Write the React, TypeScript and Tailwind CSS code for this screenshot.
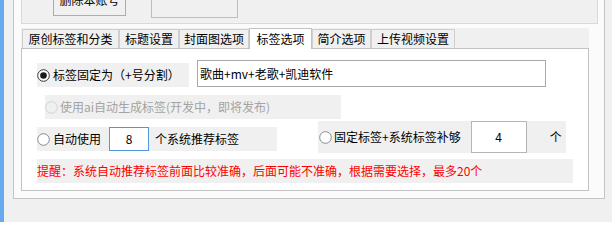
const TABS = [
  { label: "原创标签和分类", w: "w-[97px]" },
  { label: "标题设置", w: "w-[60px]" },
  { label: "封面图选项", w: "w-[70px]" },
  { label: "标签选项", w: "w-[63px]", active: true },
  { label: "简介选项", w: "w-[59px]" },
  { label: "上传视频设置", w: "w-[84px]" },
];

function Radio({ checked = false, disabled = false }: { checked?: boolean; disabled?: boolean }) {
  const stroke = disabled ? "#d2d2d2" : checked ? "#333333" : "#8a8a8a";
  return (
    <svg width="13" height="13" viewBox="0 0 13 13" className="shrink-0">
      <circle cx="6.5" cy="6.5" r="5.8" fill={disabled ? "#f0f0f0" : "#ffffff"} stroke={stroke} strokeWidth="1" />
      {checked && <circle cx="6.5" cy="6.5" r="3.3" fill="#1a1a1a" />}
    </svg>
  );
}

export default function App() {
  return (
    <div className="flex h-[222px] w-[612px] overflow-hidden bg-[#f0f0f0] font-['Noto_Sans_CJK_SC',sans-serif] text-[12px] leading-none text-black">
      <div className="w-[4px] shrink-0 bg-[#66a9ef]" />

      {/* outer group box, top runs off the picture */}
      <div className="ml-[9px] mt-[-30px] h-[229px] w-[592px] shrink-0 border border-[#c4c4c4] bg-[#fbfbfb] px-[7px]">
        {/* top settings panel */}
        <div className="flex h-[53px] w-[577px] items-start border border-[#d9d9d9] bg-[#f0f0f0] pl-[31px]">
          <button className="mt-[11px] flex h-[33px] w-[73px] items-center justify-center border border-[#adadad] bg-[#f0f0f0] text-[12px]">
            删除本账号
          </button>
          <div className="ml-[25px] mt-[18px] h-[28px] w-[87px] border border-[#bdbdbd] bg-[#f0f0f0]" />
        </div>

        {/* tab control */}
        <div className="mt-[4px] flex h-[163px] w-[568px] flex-col">
          <div className="flex h-[20px] shrink-0 items-end bg-[#f0f0f0] pl-[1px]">
            {TABS.map((t) =>
              t.active ? (
                <div
                  key={t.label}
                  className={`${t.w} relative z-10 mb-[-1px] flex h-[21px] items-center justify-center border border-b-0 border-[#c2c2c2] bg-white`}
                >
                  {t.label}
                </div>
              ) : (
                <div
                  key={t.label}
                  className={`${t.w} flex h-[19px] items-center justify-center border border-b-0 border-[#cfcfcf] bg-[#f0f0f0]`}
                >
                  {t.label}
                </div>
              )
            )}
          </div>

          <div className="flex h-[143px] flex-col border border-[#c2c2c2] bg-white pt-[11px]">
            {/* fixed tags */}
            <div className="flex items-start">
              <div className="ml-[15px] mt-[3px] flex h-[24px] w-[152px] items-center gap-[3px] bg-[#f0f0f0]">
                <Radio checked />
                <span>标签固定为（+号分割）</span>
              </div>
              <div className="ml-[8px] flex h-[27px] w-[349px] items-center border border-[#a9a9a9] bg-white pl-[2px]">
                歌曲+mv+老歌+凯迪软件
              </div>
            </div>

            {/* ai tags, disabled */}
            <div className="ml-[23px] mt-[8px] flex h-[24px] w-[296px] items-center gap-[2px] bg-[#f0f0f0] text-[#a3a3a3]">
              <Radio disabled />
              <span>使用ai自动生成标签(开发中，即将发布)</span>
            </div>

            {/* auto / fixed+system */}
            <div className="mt-[2px] flex items-start">
              <div className="ml-[15px] mt-[6px] flex h-[24px] w-[240px] items-center bg-[#f0f0f0]">
                <Radio />
                <span className="ml-[3px]">自动使用</span>
                <div className="ml-[8px] flex h-[24px] w-[40px] items-center justify-center border border-[#4f98df] bg-white">
                  8
                </div>
                <span className="ml-[6px]">个系统推荐标签</span>
              </div>
              <div className="ml-[41px] flex h-[32px] w-[248px] items-center bg-[#f0f0f0] pl-[1px]">
                <Radio />
                <span className="ml-[2px]">固定标签+系统标签补够</span>
                <div className="ml-[10px] flex h-[32px] w-[56px] items-center justify-center border border-[#b5b5b5] bg-white">
                  4
                </div>
                <span className="ml-[23px]">个</span>
              </div>
            </div>

            {/* reminder */}
            <div className="ml-[15px] mt-[6px] flex h-[24px] w-[536px] items-center bg-[#f0f0f0] text-[#ff0000]">
              提醒：系统自动推荐标签前面比较准确，后面可能不准确，根据需要选择，最多20个
            </div>
          </div>
        </div>
      </div>
    </div>
  );
}
